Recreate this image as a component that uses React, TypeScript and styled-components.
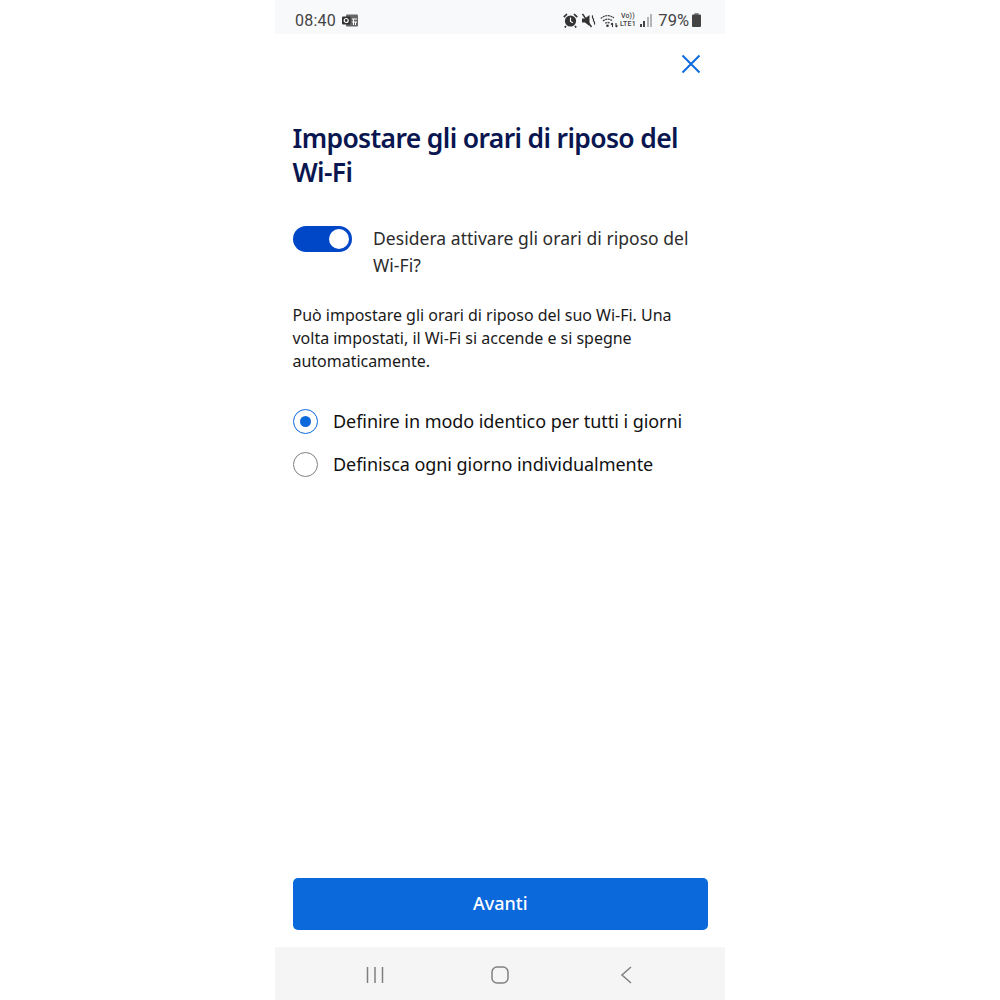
import styled, { createGlobalStyle } from 'styled-components';

const GlobalStyle = createGlobalStyle`
  html, body {
    margin: 0;
    padding: 0;
    background: #fff;
    font-family: "Noto Sans", "Open Sans", sans-serif;
  }
`;

const App = () => {
  return (
    <>
      <GlobalStyle />
      <Phone>
        <StatusBar>
          <StatusLeft>
            <Clock>08:40</Clock>
            <svg width="16" height="13" viewBox="0 0 16 13">
              <rect x="4" y="0.5" width="12" height="12" rx="1" fill="#666" />
              <rect x="0" y="2.5" width="8.500" height="8" rx="1" fill="#333" />
              <circle cx="4.200" cy="6.500" r="2" fill="none" stroke="#fff" strokeWidth="1.200" />
              <path d="M10 5h5M10 8h5M11.500 5v6M13.500 8v3" stroke="#fff" strokeWidth="1" />
            </svg>
          </StatusLeft>
          <StatusRight>
            <svg width="15" height="15" viewBox="0 0 15 15">
              <circle cx="7.500" cy="8" r="5.600" fill="#333" />
              <path d="M7.500 4.500v4l2.400 1.200" fill="none" stroke="#fff" strokeWidth="1.200" />
              <path d="M.8 4.200l3.200-3.200M14.200 4.200L11 1M3 13l-1.200 1.500M12 13l1.200 1.500" stroke="#333" strokeWidth="1.700" />
            </svg>
            <svg width="14" height="15" viewBox="0 0 14 15">
              <path d="M0 5.500h3L7.500 2v11L3 9.500H0z" fill="#333" />
              <path d="M.5 1l9 13" stroke="#333" strokeWidth="1.400" />
              <path d="M10 2.500c1.500 1 -.5 2 1 3s-.5 2 1 3-.5 2 1 3" fill="none" stroke="#333" strokeWidth="1.200" />
            </svg>
            <svg width="19" height="15" viewBox="0 0 19 15">
              <path d="M.8 5.500c4-3.800 9.500-3.800 13-.5M3 8c2.800-2.400 6.300-2.400 9-.4M5.200 10.300c1.500-1 3.200-1 4.600-.2" fill="none" stroke="#444" strokeWidth="1.300" strokeDasharray="2 .6" />
              <circle cx="7.500" cy="12.800" r="1.300" fill="#333" />
              <path d="M12.500 10v4M11 11.500l1.500-1.500M16 14v-4M17.500 12.500L16 14" stroke="#333" strokeWidth="1.100" fill="none" />
            </svg>
            <NetworkLabel>
              <span>Vo))</span>
              <span>LTE1</span>
            </NetworkLabel>
            <SignalBars>
              {[3, 6, 10, 13].map((h, i) => (
                <SignalBar key={h} $height={h} $muted={i > 1} />
              ))}
            </SignalBars>
            <Percent>79%</Percent>
            <BatteryIcon width="9" height="14" viewBox="0 0 9 14">
              <rect x="2.500" y="0" width="4" height="2" fill="#888" />
              <rect x="0" y="1.500" width="9" height="12.500" rx="1" fill="#444" />
            </BatteryIcon>
          </StatusRight>
        </StatusBar>

        <Content>
          <CloseRow>
            <svg width="20" height="20" viewBox="0 0 20 20">
              <path d="M1.500 1.500l17 17M18.500 1.500l-17 17" stroke="#0b69dc" strokeWidth="2" fill="none" />
            </svg>
          </CloseRow>

          <Title>Impostare gli orari di riposo del Wi-Fi</Title>

          <ToggleRow>
            <Toggle>
              <Knob />
            </Toggle>
            <ToggleLabel>Desidera attivare gli orari di riposo del Wi-Fi?</ToggleLabel>
          </ToggleRow>

          <Description>
            Può impostare gli orari di riposo del suo Wi-Fi. Una volta impostati, il Wi-Fi si accende e si spegne automaticamente.
          </Description>

          <RadioGroup>
            <RadioRow>
              <Radio $checked />
              <RadioLabel>Definire in modo identico per tutti i giorni</RadioLabel>
            </RadioRow>
            <RadioRow>
              <Radio />
              <RadioLabel>Definisca ogni giorno individualmente</RadioLabel>
            </RadioRow>
          </RadioGroup>

          <PrimaryButton>Avanti</PrimaryButton>
        </Content>

        <NavBar>
          <svg width="18" height="18" viewBox="0 0 18 18">
            <path d="M1.500 1v16M9 1v16M16.500 1v16" stroke="#808080" strokeWidth="1.500" fill="none" />
          </svg>
          <svg width="18" height="18" viewBox="0 0 18 18">
            <rect x="1" y="1" width="16" height="16" rx="5" stroke="#808080" strokeWidth="1.500" fill="none" />
          </svg>
          <svg width="16" height="18" viewBox="0 0 16 18">
            <path d="M15 1L6 9l9 8" stroke="#808080" strokeWidth="1.500" fill="none" />
          </svg>
        </NavBar>
      </Phone>
    </>
  );
};

const Phone = styled.div`
  width: 450px;
  height: 1000px;
  margin: 0 auto;
  display: flex;
  flex-direction: column;
  background: #fff;
`;

const StatusBar = styled.div`
  height: 34px;
  flex: none;
  background: #f8f9fb;
  display: flex;
  align-items: center;
  justify-content: space-between;
  padding: 6px 24px 0 20px;
  box-sizing: border-box;
  color: #444;
`;

const StatusLeft = styled.div`
  display: flex;
  align-items: center;
  gap: 6px;
`;

const Clock = styled.span`
  font-family: "Roboto", sans-serif;
  font-size: 16px;
  letter-spacing: 0.2px;
`;

const StatusRight = styled.div`
  display: flex;
  align-items: center;
  gap: 4px;
`;

const NetworkLabel = styled.div`
  display: flex;
  flex-direction: column;
  align-items: center;
  margin-left: -3px;
  font-family: "Roboto", sans-serif;
  font-size: 7px;
  font-weight: 500;
  line-height: 8.400px;
  letter-spacing: 0.200px;
  color: #444;
`;

const SignalBars = styled.div`
  display: flex;
  align-items: flex-end;
  gap: 1.500px;
  height: 14px;
`;

const SignalBar = styled.div<{ $height: number; $muted?: boolean }>`
  width: 2px;
  height: ${(p) => p.$height}px;
  background: ${(p) => (p.$muted ? '#b5b5b5' : '#444')};
`;

const Percent = styled.span`
  font-family: "Roboto", sans-serif;
  font-size: 16.500px;
  margin-left: 2px;
`;

const BatteryIcon = styled.svg`
  margin-left: -1px;
`;

const Content = styled.div`
  flex: 1;
  display: flex;
  flex-direction: column;
  padding: 20px 17px 17px 17.500px;
  min-height: 0;
`;

const CloseRow = styled.div`
  display: flex;
  justify-content: flex-end;
  padding-right: 7px;
  height: 20px;
`;

const Title = styled.h1`
  margin: 47px 0 0;
  font-size: 26.500px;
  line-height: 34px;
  font-weight: 600;
  letter-spacing: -0.650px;
  color: #0a1650;
`;

const ToggleRow = styled.div`
  display: flex;
  align-items: flex-start;
  gap: 21.500px;
  margin-top: 36px;
`;

const Toggle = styled.div`
  width: 59px;
  height: 26px;
  margin-top: 1px;
  flex: none;
  box-sizing: border-box;
  border-radius: 13px;
  background: #0047c8;
  display: flex;
  align-items: center;
  justify-content: flex-end;
  padding-right: 3px;
`;

const Knob = styled.div`
  width: 20px;
  height: 20px;
  border-radius: 50%;
  background: #fff;
`;

const ToggleLabel = styled.div`
  font-size: 17.500px;
  line-height: 27px;
  color: #2c2c2c;
  letter-spacing: 0.040px;
  max-width: 340px;
`;

const Description = styled.p`
  margin: 25px 0 0;
  font-size: 16px;
  line-height: 23px;
  color: #1a1a1a;
  letter-spacing: -0.020px;
`;

const RadioGroup = styled.div`
  display: flex;
  flex-direction: column;
  gap: 18px;
  margin-top: 36px;
`;

const RadioRow = styled.div`
  display: flex;
  align-items: center;
  gap: 15.500px;
  height: 25px;
`;

const Radio = styled.div<{ $checked?: boolean }>`
  width: 25px;
  height: 25px;
  flex: none;
  box-sizing: border-box;
  border-radius: 50%;
  border: 1.500px solid ${(p) => (p.$checked ? '#0b69dc' : '#808080')};
  display: flex;
  align-items: center;
  justify-content: center;
  &::after {
    content: '';
    display: ${(p) => (p.$checked ? 'block' : 'none')};
    width: 11px;
    height: 11px;
    border-radius: 50%;
    background: #0b69dc;
  }
`;

const RadioLabel = styled.span`
  font-size: 18px;
  line-height: 25px;
  color: #111;
  letter-spacing: -0.050px;
`;

const PrimaryButton = styled.button`
  margin-top: auto;
  height: 52px;
  width: 100%;
  padding: 0 0 2px;
  border: none;
  border-radius: 5px;
  background: #0b69dc;
  color: #fff;
  font-family: inherit;
  font-size: 18px;
  font-weight: 500;
`;

const NavBar = styled.div`
  height: 53px;
  flex: none;
  background: #f5f5f5;
  display: flex;
  align-items: center;
  gap: 107px;
  padding: 2px 0 0 91px;
  box-sizing: border-box;
`;

export default App;
